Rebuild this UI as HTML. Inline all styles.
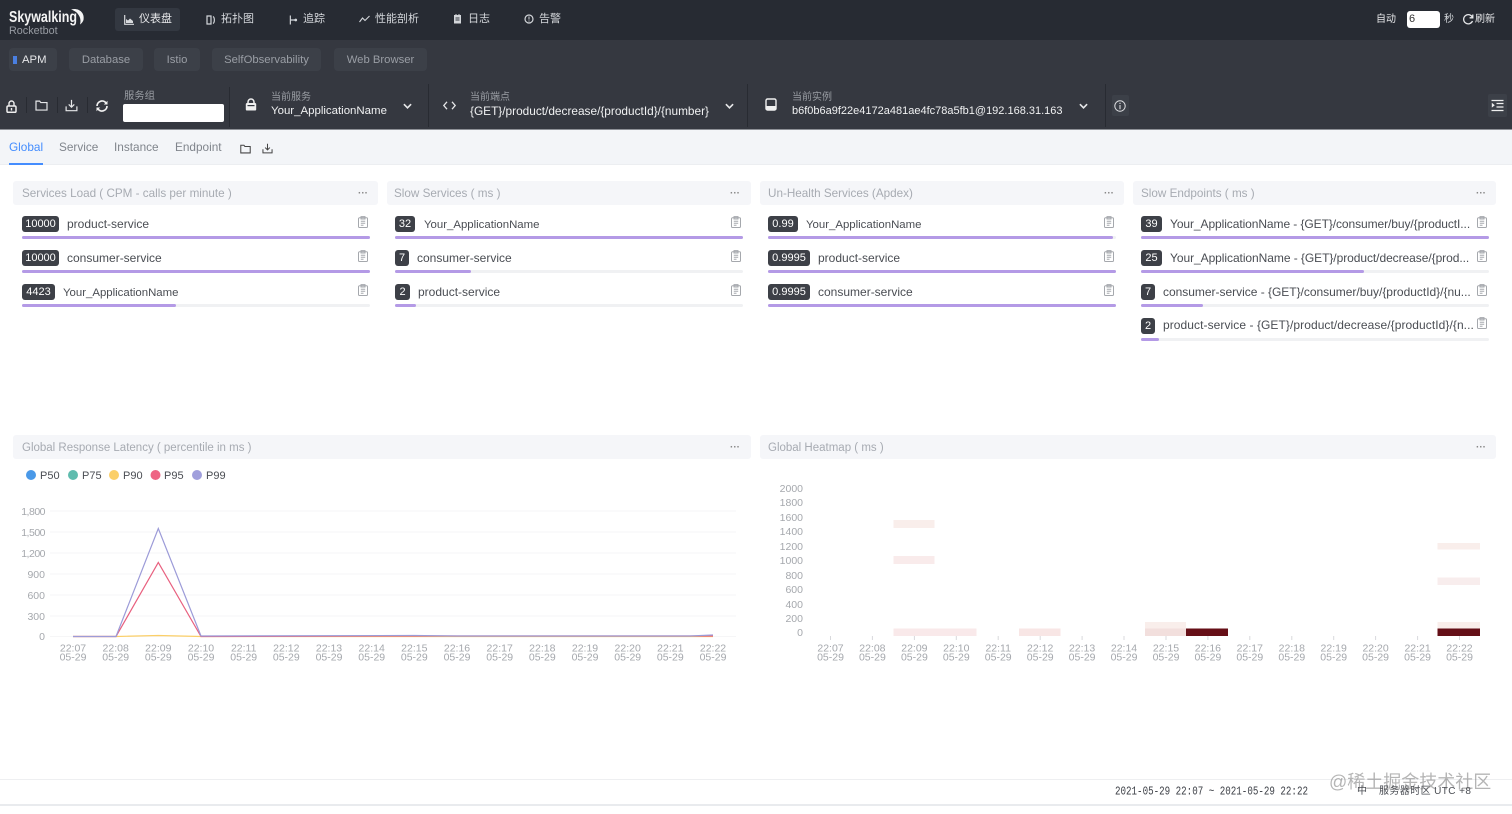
<!DOCTYPE html>
<html lang="zh"><head><meta charset="utf-8"><title>Skywalking Rocketbot</title>
<style>
html,body{margin:0;padding:0;background:#fff}
body{position:relative;width:1512px;height:814px;overflow:hidden;font-family:"Liberation Sans","Noto Sans CJK SC",sans-serif;font-size:12px;color:#3d4047;filter:blur(.3px)}
.a{position:absolute}
.t{position:absolute;white-space:nowrap;line-height:16px}
.n{color:#d3d6da;font-size:11px}
.tab{position:absolute;top:48px;height:23px;line-height:25px;background:#3c4048;border-radius:4px;color:#9a9ea5;text-align:center;font-size:11.3px}
.sep{position:absolute;width:1px;background:#282b32}
.lb{color:#999da3;font-size:10px;margin-top:1px}
.v{color:#f0f1f2;font-size:12px;margin-top:1px}
.ph{position:absolute;height:24px;background:#f5f6f9;border-radius:3px}
.pt{position:absolute;top:5px;line-height:16px;color:#a7abb2;font-size:11.7px;white-space:nowrap}
.dots{position:absolute;top:0;line-height:20px;color:#888;font-size:10px;letter-spacing:0;font-weight:bold}
.b{position:absolute;height:16px;line-height:16px;background:#3d4047;color:#fff;border-radius:3px;text-align:center;font-size:11px}
.tr{position:absolute;height:3px;background:#f0f1f3;border-radius:2px}
.f{position:absolute;height:3px;background:#b49ae6;border-radius:2px}
.x{position:absolute;white-space:nowrap;line-height:16px;font-size:12px;color:#4a4d53}
.y{font-size:11.4px;margin-top:1px}
svg{position:absolute;overflow:visible}
</style></head><body>
<svg width="0" height="0" style="position:absolute"><defs>
<symbol id="clip" viewBox="0 0 10 12"><path d="M1.5 1.8H3M7 1.8H8.5a1 1 0 0 1 1 1V10.5a1 1 0 0 1-1 1H1.5a1 1 0 0 1-1-1V2.8a1 1 0 0 1 1-1ZM3 .6H7V3H3ZM2.8 5.2H7.2M2.8 7.2H7.2M2.8 9.2H5.5" fill="none" stroke="#a5a8ad" stroke-width="1"/></symbol>
<symbol id="folder" viewBox="0 0 14 12"><path d="M1 1.2H5L6.2 2.8H13V11H1Z" fill="none" stroke="currentColor" stroke-width="1.3"/></symbol>
<symbol id="down" viewBox="0 0 14 14"><path d="M7 1V8.5M4 5.8 7 8.8 10 5.8M1.2 8V12.6H12.8V8" fill="none" stroke="currentColor" stroke-width="1.3"/></symbol>
<symbol id="chev" viewBox="0 0 10 6"><path d="M1 1 5 5 9 1" fill="none" stroke="#e6e7e9" stroke-width="1.8"/></symbol>
</defs></svg>

<!-- top bar -->
<div class="a" style="left:0;top:0;width:1512px;height:40px;background:#272b33"></div>
<div class="a" style="left:0;top:40px;width:1512px;height:89px;background:#353840"></div>
<div class="t" style="left:9px;top:10px;font-size:16px;font-weight:bold;color:#f4f4f4;transform:scaleX(.78);transform-origin:0 50%">Skywalking</div>
<svg style="left:68px;top:8px" width="18" height="17" viewBox="0 0 18 17"><path d="M3 1.500C10 -.5 17 4 15.500 12 14.800 14 13.500 15.500 12 16.500 14 10 10 3.500 3 1.500Z" fill="#f4f4f4"/></svg>
<div class="t" style="left:9px;top:23px;font-size:10.800px;color:#989ca3">Rocketbot</div>

<div class="a" style="left:115px;top:8px;width:65px;height:23px;background:#333841;border-radius:3px"></div>
<svg style="left:124px;top:15px;color:#d8dadd" width="10" height="10" viewBox="0 0 10 10"><path d="M.7 0V9.300H10" fill="none" stroke="currentColor" stroke-width="1.2"/><path d="M2 8V4L4 5.500 6 3.500 9 6V8Z" fill="currentColor"/></svg>
<div class="t n" style="left:139px;top:11px;color:#e6e7e9">仪表盘</div>
<svg style="left:206px;top:15px" width="10" height="10" viewBox="0 0 10 10"><path d="M1 1H5V9H1ZM7 1.500C8.800 2.500 8.800 7.500 7 8.500" fill="none" stroke="#d3d6da" stroke-width="1.2"/></svg>
<div class="t n" style="left:221px;top:11px">拓扑图</div>
<svg style="left:289px;top:15px" width="9" height="10" viewBox="0 0 10 10"><path d="M1.500 0V10M1.500 5H8" fill="none" stroke="#d3d6da" stroke-width="1.3"/><circle cx="7.500" cy="5" r="1.500" fill="#d3d6da"/></svg>
<div class="t n" style="left:303px;top:11px">追踪</div>
<svg style="left:359px;top:14px" width="11" height="10" viewBox="0 0 11 10"><path d="M.5 8 3.500 4 6 6.500 10.500 2" fill="none" stroke="#d3d6da" stroke-width="1.1"/></svg>
<div class="t n" style="left:375px;top:11px">性能剖析</div>
<svg style="left:453px;top:14px" width="9" height="10" viewBox="0 0 9 10"><path d="M1 1H8V9.500H1Z" fill="#d3d6da"/><path d="M3 0V2M6 0V2" stroke="#d3d6da"/><path d="M2.500 4H6.500M2.500 6H6.500" stroke="#333840"/></svg>
<div class="t n" style="left:468px;top:11px">日志</div>
<svg style="left:524px;top:14px" width="10" height="10" viewBox="0 0 10 10"><circle cx="5" cy="5" r="4" fill="none" stroke="#d3d6da" stroke-width="1.2"/><path d="M5 2.500V5.500M5 6.500V7.500" stroke="#d3d6da"/></svg>
<div class="t n" style="left:539px;top:11px">告警</div>

<div class="t n" style="left:1376px;top:12px;font-size:10px;color:#e6e7e9">自动</div>
<div class="a" style="left:1407px;top:11px;width:33px;height:17px;background:#fff;border-radius:3px"></div>
<div class="t" style="left:1409px;top:11px;font-size:11px;color:#333">6</div>
<div class="t n" style="left:1444px;top:12px;font-size:10px">秒</div>
<svg style="left:1462px;top:13px" width="12" height="12" viewBox="0 0 12 12"><path d="M10.500 4.500A4.600 4.600 0 1 0 10.500 8M10.800 1.500V4.800H7.600" fill="none" stroke="#e6e7e9" stroke-width="1.3"/></svg>
<div class="t n" style="left:1475px;top:12px;font-size:10px;color:#e6e7e9">刷新</div>

<!-- sub tabs -->
<div class="tab" style="left:9px;width:48px;color:#e6e7e9;text-align:left;text-indent:13px">APM</div>
<div class="a" style="left:13px;top:56px;width:4px;height:8px;background:#4a7fe0"></div>
<div class="tab" style="left:69px;width:74px">Database</div>
<div class="tab" style="left:154px;width:46px">Istio</div>
<div class="tab" style="left:212px;width:109px">SelfObservability</div>
<div class="tab" style="left:334px;width:93px">Web Browser</div>

<!-- toolbar -->
<svg style="left:6px;top:100px" width="11" height="13" viewBox="0 0 11 13"><path d="M3 6V3.500a2.500 2.500 0 0 1 5 0V6" fill="none" stroke="#eee" stroke-width="1.4"/><rect x="1" y="6" width="9" height="6.300" rx="1.200" fill="none" stroke="#eee" stroke-width="1.5"/><path d="M5.500 8V10.500" stroke="#eee" stroke-width="1.4"/></svg>
<div class="sep" style="left:26px;top:97px;height:16px"></div>
<svg style="left:35px;top:100px;color:#e6e7e9" width="13" height="11"><use href="#folder"/></svg>
<div class="sep" style="left:57px;top:97px;height:16px"></div>
<svg style="left:65px;top:99px;color:#e6e7e9" width="13" height="13"><use href="#down"/></svg>
<div class="sep" style="left:87px;top:97px;height:16px"></div>
<svg style="left:96px;top:100px" width="12" height="12" viewBox="0 0 12 12"><path d="M1 6A5 5 0 0 1 10 3M11 6A5 5 0 0 1 2 9" fill="none" stroke="#f0f0f0" stroke-width="1.7"/><path d="M11.500 .8V4.500H7.800ZM.5 11.200V7.500H4.200Z" fill="#f0f0f0"/></svg>
<div class="t lb" style="left:124px;top:88px;font-size:10.300px">服务组</div>
<div class="a" style="left:123px;top:104px;width:101px;height:18px;background:#fff;border-radius:2px"></div>
<div class="sep" style="left:229px;top:87px;height:40px"></div>
<svg style="left:245px;top:99px" width="12" height="12" viewBox="0 0 12 12"><path d="M3 5V3a3 3 0 0 1 6 0V5" fill="none" stroke="#f0f0f0" stroke-width="1.5"/><rect x=".8" y="4" width="10.400" height="7.500" rx="1.300" fill="#f0f0f0"/><rect x="2.500" y="6" width="7" height="1.200" fill="#353840"/></svg>
<div class="t lb" style="left:271px;top:89px">当前服务</div>
<div class="t v" style="left:271px;top:102px;font-size:11.450px">Your_ApplicationName</div>
<svg style="left:403px;top:103px" width="9" height="6"><use href="#chev"/></svg>
<div class="sep" style="left:428px;top:84px;height:43px"></div>
<svg style="left:443px;top:101px" width="13" height="9" viewBox="0 0 13 9"><path d="M4 .8 .8 4.500 4 8.200M9 .8 12.200 4.500 9 8.200" fill="none" stroke="#e6e7e9" stroke-width="1.3"/></svg>
<div class="t lb" style="left:470px;top:89px">当前端点</div>
<div class="t v" style="left:470px;top:102px;font-size:11.850px">{GET}/product/decrease/{productId}/{number}</div>
<svg style="left:725px;top:103px" width="9" height="6"><use href="#chev"/></svg>
<div class="sep" style="left:747px;top:84px;height:43px"></div>
<svg style="left:765px;top:98px" width="12" height="13" viewBox="0 0 12 13"><rect x="1" y="1" width="10" height="11" rx="1.500" fill="none" stroke="#f0f0f0" stroke-width="1.4"/><rect x="1" y="8" width="10" height="4" fill="#f0f0f0"/></svg>
<div class="t lb" style="left:792px;top:89px">当前实例</div>
<div class="t v" style="left:792px;top:102px;font-size:11px">b6f0b6a9f22e4172a481ae4fc78a5fb1@192.168.31.163</div>
<svg style="left:1079px;top:103px" width="9" height="6"><use href="#chev"/></svg>
<div class="sep" style="left:1105px;top:84px;height:43px"></div>
<div class="a" style="left:1112px;top:95px;width:17px;height:21px;background:#3c4048;border-radius:2px"></div>
<svg style="left:1114px;top:100px" width="12" height="12" viewBox="0 0 12 12"><circle cx="6" cy="6" r="5.200" fill="none" stroke="#dcdde0"/><path d="M6 5V9.200M6 2.800V4" stroke="#dcdde0" stroke-width="1.1"/></svg>
<div class="a" style="left:1488px;top:94px;width:19px;height:23px;background:#3c4048;border-radius:2px"></div>
<svg style="left:1491px;top:99px" width="13" height="13" viewBox="0 0 13 13"><path d="M.5 1.500H12.500M5.500 4.500H12.500M5.500 8H12.500M.5 11.500H12.500" stroke="#eee" stroke-width="1.3"/><path d="M.8 3.800 3.800 6.200 .8 8.600Z" fill="#eee"/></svg>

<!-- tab bar -->
<div class="a" style="left:0;top:129px;width:1512px;height:1px;background:#8d9096"></div>
<div class="a" style="left:0;top:130px;width:1512px;height:35px;background:#f3f5f8;border-bottom:1px solid #eceef1;box-sizing:border-box"></div>
<div class="t" style="left:9px;top:139px;color:#448dfe;font-size:11.800px">Global</div>
<div class="a" style="left:9px;top:163px;width:34px;height:2px;background:#448dfe"></div>
<div class="t" style="left:59px;top:139px;color:#80858c;font-size:11.800px">Service</div>
<div class="t" style="left:114px;top:139px;color:#80858c;font-size:11.800px">Instance</div>
<div class="t" style="left:175px;top:139px;color:#80858c;font-size:11.800px">Endpoint</div>
<svg style="left:240px;top:144px;color:#444" width="11" height="10"><use href="#folder"/></svg>
<svg style="left:262px;top:143px;color:#444" width="11" height="11"><use href="#down"/></svg>

<!-- panel headers -->
<div class="ph" style="left:13px;top:181px;width:365px"><span class="pt" style="left:9px">Services Load ( CPM - calls per minute )</span><span class="dots" style="left:345px;top:3px">···</span></div>
<div class="ph" style="left:387px;top:181px;width:364px"><span class="pt" style="left:7px">Slow Services ( ms )</span><span class="dots" style="left:343px;top:3px">···</span></div>
<div class="ph" style="left:760px;top:181px;width:364px"><span class="pt" style="left:8px">Un-Health Services (Apdex)</span><span class="dots" style="left:344px;top:3px">···</span></div>
<div class="ph" style="left:1133px;top:181px;width:363px"><span class="pt" style="left:8px">Slow Endpoints ( ms )</span><span class="dots" style="left:343px;top:3px">···</span></div>

<!-- col 1 -->
<div class="b" style="left:22px;top:216px;width:37px">10000</div><div class="x" style="left:67px;top:216px">product-service</div><svg style="left:358px;top:216px" width="10" height="12"><use href="#clip"/></svg><div class="tr" style="left:22px;top:236px;width:348px"></div><div class="f" style="left:22px;top:236px;width:348px"></div>
<div class="b" style="left:22px;top:250px;width:37px">10000</div><div class="x" style="left:67px;top:250px">consumer-service</div><svg style="left:358px;top:250px" width="10" height="12"><use href="#clip"/></svg><div class="tr" style="left:22px;top:270px;width:348px"></div><div class="f" style="left:22px;top:270px;width:348px"></div>
<div class="b" style="left:22px;top:284px;width:33px">4423</div><div class="x y" style="left:63px;top:284px">Your_ApplicationName</div><svg style="left:358px;top:284px" width="10" height="12"><use href="#clip"/></svg><div class="tr" style="left:22px;top:304px;width:348px"></div><div class="f" style="left:22px;top:304px;width:154px"></div>
<!-- col 2 -->
<div class="b" style="left:395px;top:216px;width:20px">32</div><div class="x y" style="left:424px;top:216px">Your_ApplicationName</div><svg style="left:731px;top:216px" width="10" height="12"><use href="#clip"/></svg><div class="tr" style="left:395px;top:236px;width:348px"></div><div class="f" style="left:395px;top:236px;width:348px"></div>
<div class="b" style="left:395px;top:250px;width:14px">7</div><div class="x" style="left:417px;top:250px">consumer-service</div><svg style="left:731px;top:250px" width="10" height="12"><use href="#clip"/></svg><div class="tr" style="left:395px;top:270px;width:348px"></div><div class="f" style="left:395px;top:270px;width:76px"></div>
<div class="b" style="left:395px;top:284px;width:15px">2</div><div class="x" style="left:418px;top:284px">product-service</div><svg style="left:731px;top:284px" width="10" height="12"><use href="#clip"/></svg><div class="tr" style="left:395px;top:304px;width:348px"></div><div class="f" style="left:395px;top:304px;width:21px"></div>
<!-- col 3 -->
<div class="b" style="left:768px;top:216px;width:30px">0.99</div><div class="x y" style="left:806px;top:216px">Your_ApplicationName</div><svg style="left:1104px;top:216px" width="10" height="12"><use href="#clip"/></svg><div class="tr" style="left:768px;top:236px;width:348px"></div><div class="f" style="left:768px;top:236px;width:345px"></div>
<div class="b" style="left:768px;top:250px;width:42px">0.9995</div><div class="x" style="left:818px;top:250px">product-service</div><svg style="left:1104px;top:250px" width="10" height="12"><use href="#clip"/></svg><div class="tr" style="left:768px;top:270px;width:348px"></div><div class="f" style="left:768px;top:270px;width:348px"></div>
<div class="b" style="left:768px;top:284px;width:42px">0.9995</div><div class="x" style="left:818px;top:284px">consumer-service</div><svg style="left:1104px;top:284px" width="10" height="12"><use href="#clip"/></svg><div class="tr" style="left:768px;top:304px;width:348px"></div><div class="f" style="left:768px;top:304px;width:348px"></div>
<!-- col 4 -->
<div class="b" style="left:1141px;top:216px;width:21px">39</div><div class="x" style="left:1170px;top:216px;letter-spacing:-.08px">Your_ApplicationName - {GET}/consumer/buy/{productI...</div><svg style="left:1477px;top:216px" width="10" height="12"><use href="#clip"/></svg><div class="tr" style="left:1141px;top:236px;width:348px"></div><div class="f" style="left:1141px;top:236px;width:348px"></div>
<div class="b" style="left:1141px;top:250px;width:21px">25</div><div class="x" style="left:1170px;top:250px;letter-spacing:-.06px">Your_ApplicationName - {GET}/product/decrease/{prod...</div><svg style="left:1477px;top:250px" width="10" height="12"><use href="#clip"/></svg><div class="tr" style="left:1141px;top:270px;width:348px"></div><div class="f" style="left:1141px;top:270px;width:223px"></div>
<div class="b" style="left:1141px;top:284px;width:14px">7</div><div class="x" style="left:1163px;top:284px;letter-spacing:-.02px">consumer-service - {GET}/consumer/buy/{productId}/{nu...</div><svg style="left:1477px;top:284px" width="10" height="12"><use href="#clip"/></svg><div class="tr" style="left:1141px;top:304px;width:348px"></div><div class="f" style="left:1141px;top:304px;width:62px"></div>
<div class="b" style="left:1141px;top:318px;width:14px">2</div><div class="x" style="left:1163px;top:317px;letter-spacing:.07px">product-service - {GET}/product/decrease/{productId}/{n...</div><svg style="left:1477px;top:317px" width="10" height="12"><use href="#clip"/></svg><div class="tr" style="left:1141px;top:338px;width:348px"></div><div class="f" style="left:1141px;top:338px;width:18px"></div>

<!-- lower panels -->
<div class="ph" style="left:13px;top:435px;width:738px"><span class="pt" style="left:9px;font-size:11.500px">Global Response Latency ( percentile in ms )</span><span class="dots" style="left:717px;top:3px">···</span></div>
<div class="ph" style="left:760px;top:435px;width:736px"><span class="pt" style="left:8px;font-size:11.500px">Global Heatmap ( ms )</span><span class="dots" style="left:716px;top:3px">···</span></div>

<svg style="left:0;top:0" width="1512" height="814" viewBox="0 0 1512 814" font-family="Liberation Sans, sans-serif">
<g font-size="11" fill="#4a4d53">
<circle cx="31" cy="475" r="5" fill="#4a99e8"/><text x="40" y="479">P50</text>
<circle cx="73" cy="475" r="5" fill="#5fbcae"/><text x="82" y="479">P75</text>
<circle cx="114" cy="475" r="5" fill="#fbcf68"/><text x="123" y="479">P90</text>
<circle cx="155.500" cy="475" r="5" fill="#ee6484"/><text x="164" y="479">P95</text>
<circle cx="197" cy="475" r="5" fill="#a09fdc"/><text x="206" y="479">P99</text>
</g>
<g stroke="#f6f6f7" stroke-width="1">
<path d="M50 511H736M50 532H736M50 553H736M50 574H736M50 595H736M50 616H736M50 636.500H736"/>
</g>
<g font-size="10.500" fill="#a5a8ad" text-anchor="end">
<text x="45" y="515" letter-spacing="-.5">1,800</text><text x="45" y="536" letter-spacing="-.5">1,500</text><text x="45" y="557" letter-spacing="-.5">1,200</text><text x="45" y="578">900</text><text x="45" y="599">600</text><text x="45" y="620">300</text><text x="45" y="640">0</text>
</g>
<g fill="none" stroke-width="1.200">
<path d="M73 636.500H116L158.300 635.500 201 636.500H713" stroke="#fbcf68"/>
<path d="M73 636.500H116L158.300 562.500 201 636.500 413 636H713" stroke="#e8607f"/>
<path d="M73 636.500H116L158.300 528.500 201 636 414 635.500 457 636H690L713 635" stroke="#9c9bd8"/>
</g>
<g font-size="10.500" fill="#a5a8ad" text-anchor="middle" transform="translate(0,-.5)">
<text x="73" y="652">22:07</text><text x="73" y="661">05-29</text>
<text x="115.700" y="652">22:08</text><text x="115.700" y="661">05-29</text>
<text x="158.300" y="652">22:09</text><text x="158.300" y="661">05-29</text>
<text x="201" y="652">22:10</text><text x="201" y="661">05-29</text>
<text x="243.700" y="652">22:11</text><text x="243.700" y="661">05-29</text>
<text x="286.300" y="652">22:12</text><text x="286.300" y="661">05-29</text>
<text x="329" y="652">22:13</text><text x="329" y="661">05-29</text>
<text x="371.700" y="652">22:14</text><text x="371.700" y="661">05-29</text>
<text x="414.300" y="652">22:15</text><text x="414.300" y="661">05-29</text>
<text x="457" y="652">22:16</text><text x="457" y="661">05-29</text>
<text x="499.700" y="652">22:17</text><text x="499.700" y="661">05-29</text>
<text x="542.300" y="652">22:18</text><text x="542.300" y="661">05-29</text>
<text x="585" y="652">22:19</text><text x="585" y="661">05-29</text>
<text x="627.700" y="652">22:20</text><text x="627.700" y="661">05-29</text>
<text x="670.300" y="652">22:21</text><text x="670.300" y="661">05-29</text>
<text x="713" y="652">22:22</text><text x="713" y="661">05-29</text>
</g>

<!-- heatmap -->
<g>
<rect x="893.500" y="520" width="41" height="8" fill="#f9eeeb"/>
<rect x="893.500" y="556" width="41" height="8" fill="#f9ebeb"/>
<rect x="893.500" y="628.500" width="83" height="7.500" fill="#f9e9ea"/>
<rect x="1019" y="628.500" width="41.500" height="7.500" fill="#f8e6e5"/>
<rect x="1145" y="622" width="41" height="6.500" fill="#f9eeeb"/>
<rect x="1145" y="628.500" width="41" height="7.500" fill="#f2dfdd"/>
<rect x="1186" y="628.500" width="42" height="7.500" fill="#660f17"/>
<rect x="1437.500" y="543" width="42.500" height="6.500" fill="#f9eeeb"/>
<rect x="1437.500" y="577.500" width="42.500" height="7.500" fill="#f8eded"/>
<rect x="1437.500" y="622" width="42.500" height="6.500" fill="#f9eeeb"/>
<rect x="1437.500" y="628.500" width="42.500" height="7.500" fill="#640f17"/>
</g>
<path d="M830.500 636V640M872.400 636V640M914.400 636V640M956.300 636V640M998.200 636V640M1040.200 636V640M1082.100 636V640M1124 636V640M1166 636V640M1207.900 636V640M1249.800 636V640M1291.800 636V640M1333.700 636V640M1375.600 636V640M1417.600 636V640M1459.500 636V640" stroke="#d8d9dc" stroke-width="1"/>
<g font-size="10.500" fill="#a5a8ad" text-anchor="end">
<text x="803" y="492">2000</text><text x="803" y="506">1800</text><text x="803" y="521">1600</text><text x="803" y="535">1400</text><text x="803" y="550">1200</text><text x="803" y="564">1000</text><text x="803" y="579">800</text><text x="803" y="593">600</text><text x="803" y="608">400</text><text x="803" y="622">200</text><text x="803" y="636">0</text>
</g>
<g font-size="10.500" fill="#a5a8ad" text-anchor="middle" transform="translate(0,-.5)">
<text x="830.500" y="652">22:07</text><text x="830.500" y="661">05-29</text>
<text x="872.400" y="652">22:08</text><text x="872.400" y="661">05-29</text>
<text x="914.400" y="652">22:09</text><text x="914.400" y="661">05-29</text>
<text x="956.300" y="652">22:10</text><text x="956.300" y="661">05-29</text>
<text x="998.200" y="652">22:11</text><text x="998.200" y="661">05-29</text>
<text x="1040.200" y="652">22:12</text><text x="1040.200" y="661">05-29</text>
<text x="1082.100" y="652">22:13</text><text x="1082.100" y="661">05-29</text>
<text x="1124" y="652">22:14</text><text x="1124" y="661">05-29</text>
<text x="1166" y="652">22:15</text><text x="1166" y="661">05-29</text>
<text x="1207.900" y="652">22:16</text><text x="1207.900" y="661">05-29</text>
<text x="1249.800" y="652">22:17</text><text x="1249.800" y="661">05-29</text>
<text x="1291.800" y="652">22:18</text><text x="1291.800" y="661">05-29</text>
<text x="1333.700" y="652">22:19</text><text x="1333.700" y="661">05-29</text>
<text x="1375.600" y="652">22:20</text><text x="1375.600" y="661">05-29</text>
<text x="1417.600" y="652">22:21</text><text x="1417.600" y="661">05-29</text>
<text x="1459.500" y="652">22:22</text><text x="1459.500" y="661">05-29</text>
</g>
</svg>

<!-- footer -->
<div class="a" style="left:0;top:779px;width:1512px;height:1px;background:#eeeff1"></div>
<div class="a" style="left:0;top:804px;width:1512px;height:2px;background:#e9ebee"></div>
<div class="t" style="left:1115px;top:784px;font-family:'Liberation Mono','Noto Sans CJK SC',monospace;font-size:9.200px;color:#3d4047;transform:scaleY(1.25)">2021-05-29 22:07 ~ 2021-05-29 22:22</div>
<div class="t" style="left:1357px;top:784px;font-size:10px;color:#4a4d53">中</div>
<div class="t" style="left:1379px;top:784px;font-size:10px;color:#4a4d53;letter-spacing:.4px">服务器时区 UTC +8</div>
<div class="t" style="left:1329px;top:772px;font-size:18px;line-height:20px;color:rgba(90,90,90,.45)">@稀土掘金技术社区</div>
</body></html>
